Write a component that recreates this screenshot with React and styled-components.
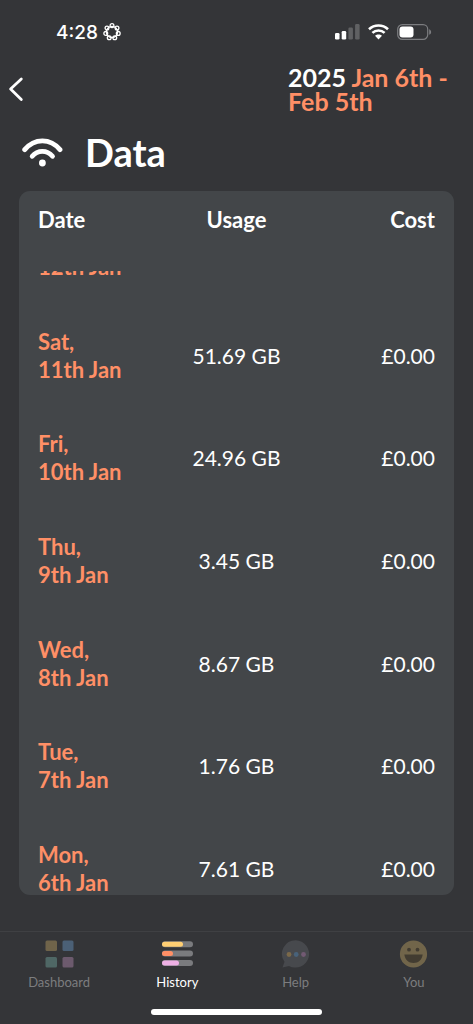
import React from "react";
import styled, { createGlobalStyle } from "styled-components";

const GlobalStyle = createGlobalStyle`
  * {
    box-sizing: border-box;
  }

  body {
    margin: 0;
    background: #343538;
    color: #fff;
    font-family: Lato, "Open Sans", sans-serif;
  }
`;

const Screen = styled.div`
  display: flex;
  flex-direction: column;
  height: 100vh;
  overflow: hidden;
`;

const StatusBar = styled.div`
  display: flex;
  justify-content: space-between;
  align-items: center;
  height: 64px;
  padding: 0 41px 0 56px;
`;

const StatusGroup = styled.div`
  display: flex;
  align-items: center;
  gap: ${(props) => props.$gap}px;
`;

const Time = styled.span`
  font-family: Inter, sans-serif;
  font-size: 19px;
  font-weight: 500;
`;

const Header = styled.header`
  display: flex;
  justify-content: space-between;
  align-items: center;
  padding: 1px 19px 0 8px;
`;

const BackButton = styled.button`
  display: flex;
  padding: 0;
  border: none;
  background: none;
  color: inherit;
  cursor: pointer;
`;

const Period = styled.div`
  width: 166px;
  color: #ff8f66;
  font-size: 25px;
  font-weight: 700;
  line-height: 24px;
  white-space: nowrap;
`;

const Year = styled.span`
  color: #fff;
`;

const TitleRow = styled.div`
  display: flex;
  align-items: center;
  gap: 22px;
  padding: 16px 22px;
`;

const Title = styled.h1`
  margin: 0;
  font-size: 38px;
  font-weight: 700;
  line-height: 46px;
`;

const Panel = styled.table`
  display: flex;
  flex: 1;
  flex-direction: column;
  min-height: 0;
  margin: 0 19px 36px;
  overflow: hidden;
  border-radius: 11px;
  background: #434649;
  font-size: 22px;
  line-height: 28px;
`;

const PanelHead = styled.thead`
  display: block;
  padding: 15px 19px 37px;
`;

const PanelBody = styled.tbody`
  display: flex;
  flex: 1;
  flex-direction: column;
  justify-content: space-between;
  min-height: 0;
  padding: 0 19px;
  overflow: hidden;
`;

const Row = styled.tr`
  display: grid;
  flex: none;
  grid-template-columns: 1fr 1fr 1fr;
  align-items: center;

  ${PanelBody} &:first-child {
    margin-top: -46px;
  }

  ${PanelBody} &:last-child {
    margin-bottom: -2px;
  }
`;

const HeadCell = styled.th`
  padding: 0;
  font-weight: 700;
  text-align: ${(props) => props.$align};
`;

const DateCell = styled(HeadCell)`
  color: #ff8f66;
`;

const Cell = styled.td`
  padding: 0;
  font-size: 21px;
  text-align: ${(props) => props.$align};
`;

const TabBar = styled.nav`
  display: grid;
  grid-template-columns: repeat(4, 1fr);
  padding-top: 8px;
  border-top: 1px solid #3f4043;
`;

const Tab = styled.a`
  display: flex;
  flex-direction: column;
  align-items: center;
  gap: 4px;
  color: #fff;
  font-size: 13px;
  line-height: 20px;
  text-decoration: none;
`;

const TabIcon = styled.svg`
  opacity: ${(props) => (props.$active ? 1 : 0.35)};
`;

const TabLabel = styled.span`
  color: ${(props) => (props.$active ? "#fff" : "#7c7d7f")};
`;

const HomeBar = styled.div`
  width: 36%;
  height: 6px;
  margin: 17px auto 9px;
  border-radius: 3px;
  background: #fff;
`;

const days = [
  { day: "Sun,", date: "12th Jan", usage: "", cost: "" },
  { day: "Sat,", date: "11th Jan", usage: "51.69 GB", cost: "£0.00" },
  { day: "Fri,", date: "10th Jan", usage: "24.96 GB", cost: "£0.00" },
  { day: "Thu,", date: "9th Jan", usage: "3.45 GB", cost: "£0.00" },
  { day: "Wed,", date: "8th Jan", usage: "8.67 GB", cost: "£0.00" },
  { day: "Tue,", date: "7th Jan", usage: "1.76 GB", cost: "£0.00" },
  { day: "Mon,", date: "6th Jan", usage: "7.61 GB", cost: "£0.00" },
];

const petals = [0, 1, 2, 3, 4, 5, 6].map((i) => {
  const angle = (i * 2 * Math.PI) / 7 - Math.PI / 2;
  return { x: 9 + 6.4 * Math.cos(angle), y: 9 + 6.4 * Math.sin(angle) };
});

const FlowerIcon = () => (
  <svg width="18" height="18" viewBox="0 0 18 18" fill="none" stroke="#fff" strokeWidth="1.3">
    <circle cx="9" cy="9" r="5.6" />
    {petals.map((p, i) => (
      <circle key={i} cx={p.x} cy={p.y} r="1.9" />
    ))}
  </svg>
);

const SignalIcon = () => (
  <svg width="25" height="16" viewBox="0 0 25 16" fill="#fff">
    <rect x="0" y="9" width="4.5" height="6.5" rx="1.3" />
    <rect x="6.7" y="7" width="4.5" height="8.5" rx="1.3" />
    <rect x="13.4" y="3.5" width="4.5" height="12" rx="1.3" opacity="0.22" />
    <rect x="20.1" y="0" width="4.5" height="15.5" rx="1.3" opacity="0.22" />
  </svg>
);

const StatusWifiIcon = () => (
  <svg width="21" height="16" viewBox="0 0 21 16" fill="none" stroke="#fff" strokeWidth="2.6">
    <path d="M1 5.3C6.3 .2 14.7 .2 20 5.3" />
    <path d="M4.4 8.9C7.8 5.6 13.2 5.6 16.6 8.9" />
    <path d="M7 11.8C9 9.9 12 9.9 14 11.8L10.5 15.5Z" fill="#fff" stroke="none" />
  </svg>
);

const BatteryIcon = () => (
  <svg width="35" height="16" viewBox="0 0 35 16">
    <rect x="0.7" y="0.7" width="30" height="14.6" rx="4.6" fill="none" stroke="#7c7d80" strokeWidth="1.2" />
    <rect x="2.5" y="2.5" width="14" height="11" rx="3" fill="#fff" />
    <path d="M32.2 5.2C34.8 6.2 34.8 9.8 32.2 10.8Z" fill="#7c7d80" />
  </svg>
);

const ChevronIcon = () => (
  <svg width="16" height="26" viewBox="0 0 16 26" fill="none" stroke="#fff" strokeWidth="2.8" strokeLinecap="round">
    <path d="M13.3 3L2.6 13L13.3 23.5" strokeLinejoin="round" />
  </svg>
);

const WifiIcon = () => (
  <svg width="41" height="30" viewBox="0 0 41 30" fill="none" stroke="#fff" strokeWidth="4.8" strokeLinecap="round">
    <path d="M2.7 12.6C12.5 .9 28.3 .9 38 12.6" />
    <path d="M10.2 19.3C15.7 12.6 25 12.6 30.5 19.3" />
    <circle cx="20.4" cy="26" r="3.4" fill="#fff" stroke="none" />
  </svg>
);

const DashboardIcon = () => (
  <>
    <rect x="0" y="0.5" width="11.5" height="10.5" rx="1.5" fill="#e0bd6c" />
    <rect x="17" y="0.5" width="11" height="10.5" rx="1.5" fill="#78b0ea" />
    <rect x="0" y="17" width="11.5" height="10.5" rx="1.5" fill="#82c5b8" />
    <rect x="17" y="17" width="11" height="10.5" rx="1.5" fill="#d59fcf" />
  </>
);

const HistoryIcon = () => (
  <>
    <rect x="-1.5" y="1.2" width="31" height="6" rx="3" fill="#7a7b7e" />
    <rect x="-1.5" y="1.7" width="21" height="5" rx="2.5" fill="#ffcf73" />
    <rect x="-1.5" y="10.6" width="31" height="6" rx="3" fill="#7a7b7e" />
    <rect x="-1.5" y="11.1" width="11" height="5" rx="2.5" fill="#ff8f66" />
    <rect x="-1.5" y="19.9" width="31" height="6" rx="3" fill="#7a7b7e" />
    <rect x="-1.5" y="20.4" width="17" height="5" rx="2.5" fill="#eeb0e5" />
  </>
);

const HelpIcon = () => (
  <>
    <path d="M14.2 .2A13.7 13.7 0 1 1 7.5 26L1 27.5L3 21.8A13.7 13.7 0 0 1 14.2 .2Z" fill="#6c6e74" />
    <circle cx="7.5" cy="14.5" r="2.4" fill="#ffc96b" />
    <circle cx="14.7" cy="14.5" r="2.4" fill="#6db6f5" />
    <circle cx="22" cy="14.5" r="2.4" fill="#e59fe0" />
  </>
);

const YouIcon = () => (
  <>
    <circle cx="14" cy="14" r="13.6" fill="#e3c06c" />
    <circle cx="9.5" cy="9.7" r="1.9" fill="#5c4a26" />
    <circle cx="18" cy="9.7" r="1.9" fill="#5c4a26" />
    <path d="M4.8 14.5H23.2C22.5 19.5 19 23 14 23S5.5 19.5 4.8 14.5Z" fill="#5c4a26" />
  </>
);

const tabs = [
  { label: "Dashboard", Icon: DashboardIcon },
  { label: "History", Icon: HistoryIcon, active: true },
  { label: "Help", Icon: HelpIcon },
  { label: "You", Icon: YouIcon },
];

const App = () => {
  return (
    <Screen>
      <GlobalStyle />
      <StatusBar>
        <StatusGroup $gap={5}>
          <Time>4:28</Time>
          <FlowerIcon />
        </StatusGroup>
        <StatusGroup $gap={8}>
          <SignalIcon />
          <StatusWifiIcon />
          <BatteryIcon />
        </StatusGroup>
      </StatusBar>

      <Header>
        <BackButton aria-label="Back">
          <ChevronIcon />
        </BackButton>
        <Period>
          <Year>2025</Year> Jan 6th -<br />
          Feb 5th
        </Period>
      </Header>

      <TitleRow>
        <WifiIcon />
        <Title>Data</Title>
      </TitleRow>

      <Panel>
        <PanelHead>
          <Row>
            <HeadCell $align="left">Date</HeadCell>
            <HeadCell $align="center">Usage</HeadCell>
            <HeadCell $align="right">Cost</HeadCell>
          </Row>
        </PanelHead>
        <PanelBody>
          {days.map((item) => (
            <Row key={item.date}>
              <DateCell scope="row" $align="left">
                {item.day}
                <br />
                {item.date}
              </DateCell>
              <Cell $align="center">{item.usage}</Cell>
              <Cell $align="right">{item.cost}</Cell>
            </Row>
          ))}
        </PanelBody>
      </Panel>

      <TabBar>
        {tabs.map(({ label, Icon, active }) => (
          <Tab key={label} href="#" aria-current={active ? "page" : undefined}>
            <TabIcon $active={active} width="31" height="28" viewBox="-1.5 0 31 28">
              <Icon />
            </TabIcon>
            <TabLabel $active={active}>{label}</TabLabel>
          </Tab>
        ))}
      </TabBar>
      <HomeBar />
    </Screen>
  );
};

export default App;
